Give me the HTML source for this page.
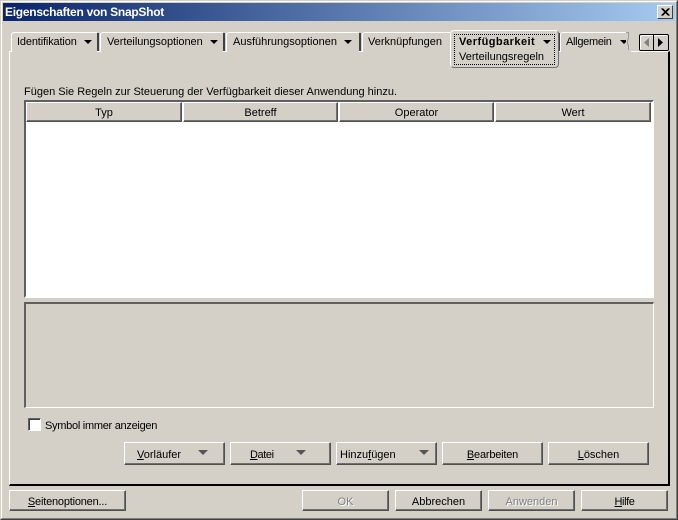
<!DOCTYPE html>
<html><head><meta charset="utf-8"><style>
html,body{margin:0;padding:0;background:#d4d0c8}
body{width:678px;height:520px;position:relative;overflow:hidden;font-family:"Liberation Sans",sans-serif;font-size:11px;color:#000}
div,span.a{position:absolute;box-sizing:border-box}
.t{white-space:nowrap;line-height:13px}
.btn{background:#d4d0c8;border:1px solid;border-color:#fff #505050 #505050 #fff;box-shadow:inset -1px -1px 0 #707070;text-align:center;line-height:25px;white-space:nowrap}
.bot{top:490px;height:21px;line-height:23px}
.tab{background:#d4d0c8;border-top:1px solid #fff;border-left:1px solid #fff;border-top-left-radius:3px;height:20px;top:32px}
.tabr{width:2px;background:#404040;top:33px;height:18px}
.tri{width:0;height:0;border-left:4px solid transparent;border-right:4px solid transparent;border-top:4px solid #000}
.tri2{width:0;height:0;border-left:5px solid transparent;border-right:5px solid transparent;border-top:5px solid #555}
.hd{top:102px;height:20px;background:#d4d0c8;border:1px solid;border-color:#fff #505050 #505050 #fff;box-shadow:inset -1px -1px 0 #707070;text-align:center;line-height:21px}
.dis{color:#808080;text-shadow:1px 1px 0 #fff}
u{text-decoration:underline}
</style></head><body>
<div style="left:0;top:0;width:678px;height:520px;border:1px solid;border-color:#d4d0c8 #404040 #404040 #d4d0c8"></div>
<div style="left:1px;top:1px;width:676px;height:518px;border:1px solid;border-color:#fff #808080 #808080 #fff"></div>
<div style="left:3px;top:3px;width:672px;height:18px;background:linear-gradient(90deg,#0a246a,#a6caf0)"></div>
<div class="t" style="left:5px;top:6px;color:#fff;font-weight:bold;font-size:12px;letter-spacing:-.27px">Eigenschaften von SnapShot</div>
<div style="left:657px;top:5px;width:16px;height:14px;background:#d4d0c8;border:1px solid;border-color:#fff #404040 #404040 #fff"><svg width="14" height="12" style="position:absolute;left:0;top:0"><path d="M3.500 2.500L10.500 9.500M4.500 2.500L11.500 9.500M10.500 2.500L3.500 9.500M11.500 2.500L4.500 9.500" stroke="#000" fill="none"/></svg></div>

<!-- panel -->
<div style="left:9px;top:51px;width:661px;height:435px;border:2px solid;border-color:#fff #000 #000 #fff;border-top-width:1px;border-left-width:1px"></div>

<!-- tabs -->
<div class="tab" style="left:11px;width:86px"></div><div class="tabr" style="left:97px"></div>
<div class="t" style="left:17px;top:36px;letter-spacing:-.15px">Identifikation</div><div class="tri" style="left:84px;top:40px"></div>
<div class="tab" style="left:100px;width:123px"></div><div class="tabr" style="left:223px"></div>
<div class="t" style="left:107px;top:36px;letter-spacing:-.05px">Verteilungsoptionen</div><div class="tri" style="left:210px;top:40px"></div>
<div class="tab" style="left:226px;width:133px"></div><div class="tabr" style="left:359px"></div>
<div class="t" style="left:233px;top:36px">Ausführungsoptionen</div><div class="tri" style="left:344px;top:40px"></div>
<div class="tab" style="left:362px;width:88px"></div>
<div class="t" style="left:368px;top:36px">Verknüpfungen</div>
<div class="tab" style="left:560px;width:66px"></div><div class="tabr" style="left:559px;width:1px"></div>
<div class="t" style="left:566px;top:36px;letter-spacing:-.3px">Allgemein</div><div class="tri" style="left:620px;top:40px"></div>
<div style="left:626px;top:33px;width:5px;height:19px;background:#d4d0c8"></div>
<svg width="6" height="20" style="position:absolute;left:625px;top:32px"><path d="M1 0.500H4M3.500 1V6L2.500 9V11L3.500 14V18" stroke="#999" fill="none"/></svg>

<!-- active tab -->
<div style="left:450px;top:30px;width:109px;height:38px;background:#d4d0c8;border:1px solid;border-color:#fff #707070 #707070 #fff;border-radius:4px"></div>
<div style="left:454px;top:34px;width:101px;height:31px;border:1px dotted #000"></div>
<div class="t" style="left:459px;top:36px;font-weight:bold;letter-spacing:.45px">Verfügbarkeit</div><div class="tri" style="left:543px;top:40px"></div>
<div class="t" style="left:459px;top:51px">Verteilungsregeln</div>

<!-- scroll -->
<div style="left:639px;top:34px;width:15px;height:17px;background:#d4d0c8;border:1px solid #000;box-shadow:inset 1px 1px 0 #fff;border-radius:2px 0 0 2px"></div>
<div style="left:654px;top:34px;width:15px;height:17px;background:#d4d0c8;border:1px solid #000;border-left:none;box-shadow:inset 0 1px 0 #fff;border-radius:0 2px 2px 0"></div>
<svg width="30" height="17" style="position:absolute;left:639px;top:34px"><path d="M10 4V13L5 8.500Z" fill="#808080"/><path d="M19 4V13L24 8.500Z" fill="#000"/></svg>

<div class="t" style="left:24px;top:86px">Fügen Sie Regeln zur Steuerung der Verfügbarkeit dieser Anwendung hinzu.</div>

<!-- table -->
<div style="left:24px;top:100px;width:630px;height:198px;background:#fff;border:2px solid;border-color:#606060 #fff #fff #606060"></div>
<div class="hd" style="left:26px;width:156px">Typ</div>
<div class="hd" style="left:183px;width:155px">Betreff</div>
<div class="hd" style="left:339px;width:155px">Operator</div>
<div class="hd" style="left:495px;width:156px">Wert</div>

<div style="left:24px;top:302px;width:630px;height:106px;border:2px solid;border-color:#606060 #fff #fff #606060;border-right-width:1px;border-bottom-width:1px"></div>

<!-- checkbox -->
<div style="left:28px;top:418px;width:13px;height:13px;background:#fff;border:1px solid;border-color:#606060 #fff #fff #606060;box-shadow:inset 1px 1px 0 #404040"></div>
<div class="t" style="left:45px;top:420px;letter-spacing:-.28px">Symbol immer anzeigen</div>

<!-- action buttons -->
<div class="btn" style="left:124px;top:442px;width:101px;height:23px;text-align:left;padding-left:12px"><u>V</u>orläufer</div><div class="tri2" style="left:198px;top:450px"></div>
<div class="btn" style="left:230px;top:442px;width:101px;height:23px;text-align:left;padding-left:19px;letter-spacing:-.4px"><u>D</u>atei</div><div class="tri2" style="left:296px;top:450px"></div>
<div class="btn" style="left:336px;top:442px;width:101px;height:23px;text-align:left;padding-left:3px">Hinzu<u>f</u>ügen</div><div class="tri2" style="left:419px;top:450px"></div>
<div class="btn" style="left:442px;top:442px;width:101px;height:23px;letter-spacing:-.2px"><u>B</u>earbeiten</div>
<div class="btn" style="left:548px;top:442px;width:101px;height:23px"><u>L</u>öschen</div>

<!-- bottom buttons -->
<div class="btn bot" style="left:9px;width:117px;letter-spacing:-.2px"><u>S</u>eitenoptionen...</div>
<div class="btn bot dis" style="left:302px;width:87px">OK</div>
<div class="btn bot" style="left:395px;width:87px">Abbrechen</div>
<div class="btn bot dis" style="left:488px;width:87px">Anwenden</div>
<div class="btn bot" style="left:581px;width:87px;letter-spacing:-.4px"><u>H</u>ilfe</div>
</body></html>
